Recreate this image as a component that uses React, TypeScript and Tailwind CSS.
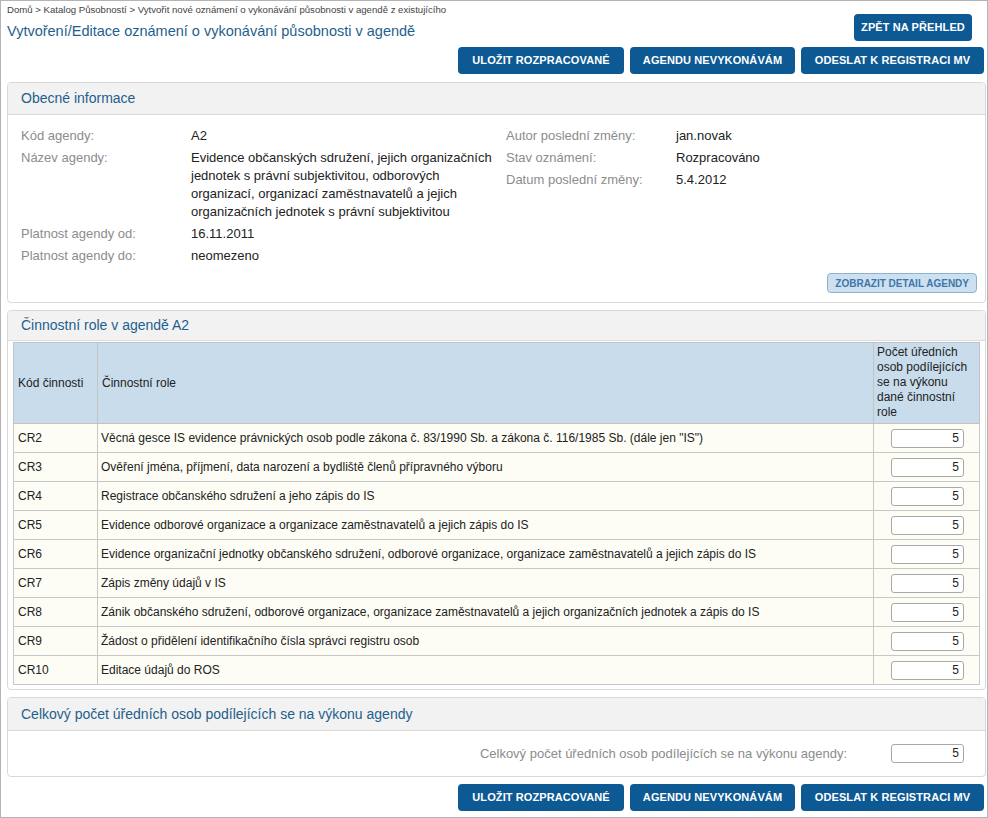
import React from 'react'

const rows = [
  ['CR2', 'Věcná gesce IS evidence právnických osob podle zákona č. 83/1990 Sb. a zákona č. 116/1985 Sb. (dále jen "IS")'],
  ['CR3', 'Ověření jména, příjmení, data narození a bydliště členů přípravného výboru'],
  ['CR4', 'Registrace občanského sdružení a jeho zápis do IS'],
  ['CR5', 'Evidence odborové organizace a organizace zaměstnavatelů a jejich zápis do IS'],
  ['CR6', 'Evidence organizační jednotky občanského sdružení, odborové organizace, organizace zaměstnavatelů a jejich zápis do IS'],
  ['CR7', 'Zápis změny údajů v IS'],
  ['CR8', 'Zánik občanského sdružení, odborové organizace, organizace zaměstnavatelů a jejich organizačních jednotek a zápis do IS'],
  ['CR9', 'Žádost o přidělení identifikačního čísla správci registru osob'],
  ['CR10', 'Editace údajů do ROS'],
]

const Btn = ({ children, w }: { children: React.ReactNode; w: string }) => (
  <button className={`${w} h-[27px] rounded-[4px] bg-[#0d5994] text-white text-[11px] font-bold tracking-[0.1px] flex items-center justify-center`}>
    {children}
  </button>
)

const Actions = () => (
  <div className="flex justify-end gap-[6px] pr-[3px]">
    <Btn w="w-[166px]">ULOŽIT ROZPRACOVANÉ</Btn>
    <Btn w="w-[165px]">AGENDU NEVYKONÁVÁM</Btn>
    <Btn w="w-[183px]">ODESLAT K REGISTRACI MV</Btn>
  </div>
)

const Panel = ({ title, h, children }: { title: string; h: string; children: React.ReactNode }) => (
  <div className="border border-[#d9d9d9] rounded-[4px] bg-white overflow-hidden">
    <div className={`${h} bg-[#f2f2f2] border-b border-[#dcdcdc] flex items-center pl-[13px] text-[14px] text-[#1f5f8d]`}>{title}</div>
    {children}
  </div>
)

const Field = ({ label, children }: { label: string; children: React.ReactNode }) => (
  <div className="grid grid-cols-[170px_1fr] leading-[18px]">
    <div className="text-[#8c8c8c]">{label}</div>
    <div className="text-[#222] pr-[6px]">{children}</div>
  </div>
)

const NumInput = () => (
  <div className="w-[73px] h-[19px] border border-[#a8a8a8] rounded-[3px] bg-white text-right pr-[4px] text-[12px] leading-[17px] text-[#222]">5</div>
)

export default function App() {
  return (
    <div className="w-[988px] h-[818px] border border-[#b4b4b4] bg-white text-[12px] text-[#222] font-['Liberation_Sans',Arial,sans-serif] pl-[6px] overflow-hidden">
      <div className="flex justify-between">
        <div>
          <div className="text-[9.6px] text-[#444] leading-[12px] pt-[3px]">Domů &gt; Katalog Působností &gt; Vytvořit nové oznámení o vykonávání působnosti v agendě z existujícího</div>
          <div className="text-[14.5px] text-[#1f5f8d] leading-[18px] mt-[6px]">Vytvoření/Editace oznámení o vykonávání působnosti v agendě</div>
        </div>
        <div className="pt-[13px] pr-[15px]">
          <Btn w="w-[118px]">ZPĚT NA PŘEHLED</Btn>
        </div>
      </div>
      <div className="mt-[6px]">
        <Actions />
      </div>

      <div className="mt-[8px] flex flex-col gap-[7px] pr-[1px]">
        <Panel title="Obecné informace" h="h-[32px]">
          <div className="pl-[13px] pr-[8px] pt-[12px] pb-[9px] text-[13px]">
            <div className="grid grid-cols-[485px_1fr]">
              <div className="flex flex-col gap-[4px]">
                <Field label="Kód agendy:">A2</Field>
                <Field label="Název agendy:">Evidence občanských sdružení, jejich organizačních jednotek s právní subjektivitou, odborových organizací, organizací zaměstnavatelů a jejich organizačních jednotek s právní subjektivitou</Field>
                <Field label="Platnost agendy od:">16.11.2011</Field>
                <Field label="Platnost agendy do:">neomezeno</Field>
              </div>
              <div className="flex flex-col gap-[4px]">
                <Field label="Autor poslední změny:">jan.novak</Field>
                <Field label="Stav oznámení:">Rozpracováno</Field>
                <Field label="Datum poslední změny:">5.4.2012</Field>
              </div>
            </div>
            <div className="flex justify-end mt-[8px]">
              <button className="h-[20px] px-[7px] rounded-[4px] border border-[#8db1cf] bg-[#cde0f0] text-[#3f76a8] text-[10px] font-bold">ZOBRAZIT DETAIL AGENDY</button>
            </div>
          </div>
        </Panel>

        <Panel title="Činnostní role v agendě A2" h="h-[30px]">
          <div className="px-[5px] pt-[1px] pb-[4px]">
            <table className="w-full border-collapse text-[12px]">
              <thead>
                <tr className="bg-[#c9dcec] text-[#222]">
                  <th className="w-[84px] border border-[#c3c3c3] font-normal text-left align-middle pl-[4px] h-[81px]">Kód činnosti</th>
                  <th className="border border-[#c3c3c3] font-normal text-left pl-[4px]">Činnostní role</th>
                  <th className="w-[106px] border border-[#c3c3c3] font-normal text-left leading-[15px] px-[3px] pt-[1px] pb-[2px]">Počet úředních osob podílejících se na výkonu dané činnostní role</th>
                </tr>
              </thead>
              <tbody>
                {rows.map(([code, name]) => (
                  <tr key={code} className="bg-[#fdfdf6] h-[29px]">
                    <td className="border border-[#c8c8c8] pl-[4px]">{code}</td>
                    <td className="border border-[#c8c8c8] pl-[3px]">{name}</td>
                    <td className="border border-[#c8c8c8] pl-[17px]"><NumInput /></td>
                  </tr>
                ))}
              </tbody>
            </table>
          </div>
        </Panel>

        <Panel title="Celkový počet úředních osob podílejících se na výkonu agendy" h="h-[33px]">
          <div className="h-[45px] flex items-center justify-end pr-[21px] gap-[44px]">
            <span className="text-[#8c8c8c] text-[13px]">Celkový počet úředních osob podílejících se na výkonu agendy:</span>
            <NumInput />
          </div>
        </Panel>
      </div>

      <div className="mt-[7px]">
        <Actions />
      </div>
    </div>
  )
}
